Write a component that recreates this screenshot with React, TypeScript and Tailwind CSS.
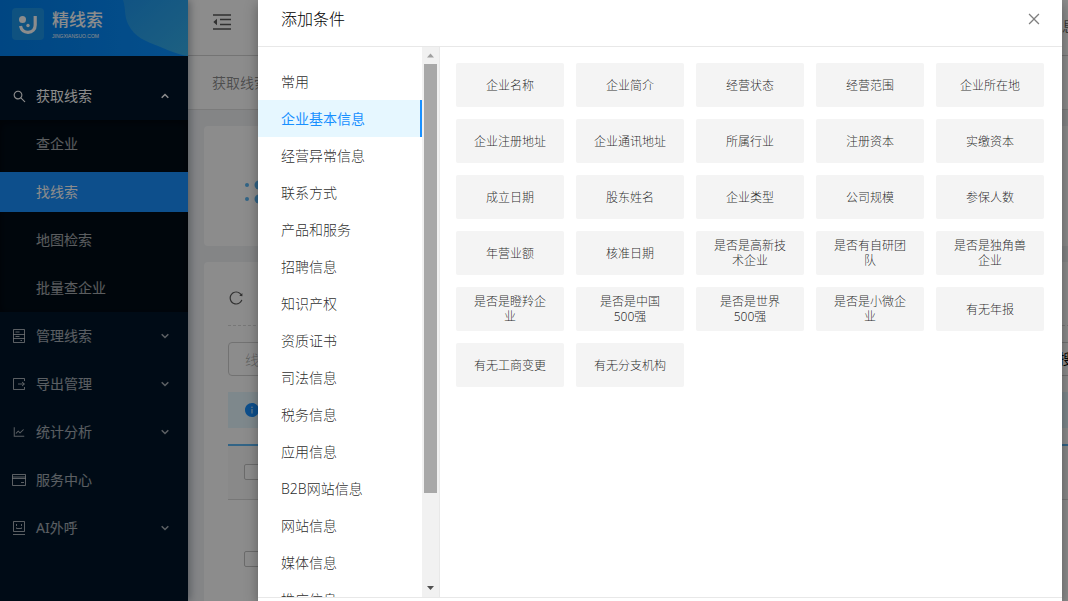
import type { ReactNode } from "react";
import {
  AiFillInfoCircle,
  AiOutlineClose,
  AiOutlineLineChart,
  AiOutlineReload,
  AiOutlineSearch,
} from "react-icons/ai";

const FONT = "font-['Noto_Sans','Noto_Sans_CJK_SC',sans-serif]";

const subMenu = ["查企业", "找线索", "地图检索", "批量查企业"];

const categories = [
  "常用", "企业基本信息", "经营异常信息", "联系方式", "产品和服务", "招聘信息", "知识产权",
  "资质证书", "司法信息", "税务信息", "应用信息", "B2B网站信息", "网站信息", "媒体信息", "推广信息",
];

const conditions = [
  "企业名称", "企业简介", "经营状态", "经营范围", "企业所在地",
  "企业注册地址", "企业通讯地址", "所属行业", "注册资本", "实缴资本",
  "成立日期", "股东姓名", "企业类型", "公司规模", "参保人数",
  "年营业额", "核准日期", "是否是高新技术企业", "是否有自研团队", "是否是独角兽企业",
  "是否是瞪羚企业", "是否是中国500强", "是否是世界500强", "是否是小微企业", "有无年报",
  "有无工商变更", "有无分支机构",
];

function LineIcon({ d }: { d: string }) {
  return (
    <svg width="14" height="14" viewBox="0 0 14 14" fill="none" stroke="currentColor" aria-hidden="true">
      <path d={d} />
    </svg>
  );
}

const CABINET = "M1.5.5h11v13h-11zM1.5 5.5h11M1.5 9.500h11M3.500 3h4M3.500 7.500h4M8.500 11.500h1.500";
const EXPORT = "M12.500 4V1.500h-11v11h11V10M6 7h6M10 5l2.500 2-2.500 2";
const CARD = "M.5 1.500h13v11H.5zM.5 4h13M.5 5.500h13M9 9.500h3";
const ROBOT = "M1.5.5h11v10h-11zM1 13.500h12M4.500 3v2M9.500 3v2M4.500 6.500v1h5v-1";

function FoldIcon() {
  return (
    <svg width="18" height="16" viewBox="0 0 18 16" aria-hidden="true">
      <path d="M0 1h18M0 15h18M7 5.500h11M7 10.500h11" stroke="currentColor" strokeWidth="1.500" />
      <path d="M4 4.800v6.400L.3 8z" fill="currentColor" />
    </svg>
  );
}

function Chevron({ up = false }: { up?: boolean }) {
  return (
    <svg width="8" height="6" viewBox="0 0 8 6" fill="none" stroke="currentColor" strokeWidth="1.6" aria-hidden="true">
      <path d={up ? "M.7 4.700 4 1.500l3.300 3.200" : "M.7 1.300 4 4.500l3.300-3.200"} />
    </svg>
  );
}

function MenuItem({ icon, label, arrow = true, open = false }: { icon: ReactNode; label: string; arrow?: boolean; open?: boolean }) {
  return (
    <button
      type="button"
      className={`my-1 flex h-10 w-full items-center pr-[19px] pl-3 text-left ${open ? "text-white" : "text-white/65"}`}
    >
      <span className="w-6 text-sm">{icon}</span>
      <span className="flex-1">{label}</span>
      {arrow && <Chevron up={open} />}
    </button>
  );
}

function Logo() {
  return (
    <div className="relative h-14 shrink-0 overflow-hidden bg-linear-to-r from-[#0080ee] to-[#0a90ff]">
      <svg className="absolute inset-0 h-full w-full" viewBox="0 0 188 56" preserveAspectRatio="none" aria-hidden="true">
        <defs>
          <linearGradient id="wave" x1="0" y1="0" x2="1" y2="1">
            <stop offset="0" stopColor="#1f98ee" />
            <stop offset="1" stopColor="#36b0ec" />
          </linearGradient>
        </defs>
        <path d="M123 0c3 9 1 15 5 24 7 14 18 17 30 22 10 4 18 8 30 10V0z" fill="url(#wave)" />
      </svg>
      <div className="relative flex h-12 items-center gap-2 pl-3">
        <svg width="32" height="32" viewBox="0 0 32 32" aria-hidden="true">
          <rect width="32" height="32" rx="4" fill="#1d96ea" />
          <circle cx="10.500" cy="11.500" r="3.500" fill="#fff" />
          <circle cx="16" cy="17.500" r="1.700" fill="#fff" />
          <path d="M8.500 18c1 4.500 4 6.300 7.500 6.300 4.500 0 7.200-3 7.200-7.300V8" fill="none" stroke="#fff" strokeWidth="3.200" />
        </svg>
        <div className="text-white">
          <div className="text-[17px] leading-6 font-medium">精线索</div>
          <div className="h-2 font-['Liberation_Sans',sans-serif] text-[5px] leading-2">JINGXIANSUO.COM</div>
        </div>
      </div>
    </div>
  );
}

function Sidebar() {
  return (
    <aside className="relative z-10 flex w-47 shrink-0 flex-col bg-[#001529] font-normal shadow-[2px_0_8px_rgba(0,21,41,0.35)]">
      <Logo />
      <nav className="flex flex-col pt-4">
        <MenuItem icon={<AiOutlineSearch className="size-[15px]" />} label="获取线索" open />
        <div className="flex flex-col bg-[#000c17] shadow-[inset_0_2px_8px_rgba(0,0,0,0.45)]">
          {subMenu.map((label) => (
            <a
              key={label}
              href="#"
              className={`my-1 flex h-10 items-center pl-9 ${label === "找线索" ? "bg-[#1890ff] text-white" : "text-white/65"}`}
            >
              {label}
            </a>
          ))}
        </div>
        <div className="flex flex-col">
          <MenuItem icon={<LineIcon d={CABINET} />} label="管理线索" />
          <MenuItem icon={<LineIcon d={EXPORT} />} label="导出管理" />
          <MenuItem icon={<AiOutlineLineChart />} label="统计分析" />
          <MenuItem icon={<LineIcon d={CARD} />} label="服务中心" arrow={false} />
          <MenuItem icon={<LineIcon d={ROBOT} />} label="AI外呼" />
        </div>
      </nav>
    </aside>
  );
}

function Page() {
  return (
    <main className="flex min-w-0 flex-1 flex-col text-black/65">
      <header className="flex h-14 shrink-0 items-center justify-between border-b border-[#d4d4d4] bg-white pr-6 pb-1 pl-[25px]">
        <button type="button" aria-label="收起菜单" className="pb-2 text-black/65">
          <FoldIcon />
        </button>
        <span className="font-normal">消息</span>
      </header>
      <div className="flex h-[54px] shrink-0 items-center border-b border-[#e0e0e0] bg-white pl-6 font-normal text-black/45">获取线索</div>
      <div className="flex flex-1 flex-col gap-4 pt-4 pl-4">
        <section className="flex h-30 shrink-0 items-center rounded-sm bg-white pt-3 pl-10">
          <svg width="36" height="24" viewBox="0 0 36 24" fill="#5cb6f5" aria-hidden="true">
            <circle cx="3" cy="5" r="2" />
            <circle cx="3" cy="19" r="2" />
            <circle cx="15" cy="5" r="4.500" />
            <circle cx="15" cy="19" r="4.500" />
            <circle cx="29" cy="5" r="4.500" />
            <circle cx="29" cy="19" r="4.500" />
          </svg>
        </section>
        <section className="flex-1 rounded-sm bg-white pl-6">
          <div className="flex h-16 items-center border-b border-dashed border-[#d9d9d9] pt-2">
            <button type="button" aria-label="刷新" className="text-base">
              <AiOutlineReload />
            </button>
          </div>
          <div className="mt-4 flex items-center justify-between rounded-sm border border-[#d0d0d0] pr-3">
            <input aria-label="线索名称" placeholder="线索名称" className="h-8 w-60 pl-4 outline-none placeholder:text-black/35" />
            <button type="button" className="font-normal text-black">搜索</button>
          </div>
          <div className="mt-4 flex h-9 items-center bg-[#e6f7ff] pl-4 text-sm text-[#1890ff]">
            <AiFillInfoCircle className="size-4" />
          </div>
          <table className="mt-4 w-full border-t-2 border-[#5cb6f5] text-left">
            <tbody>
              <tr className="h-[54px] border-b border-[#d9d9d9] bg-[#fafafa]">
                <td className="pl-4">
                  <input type="checkbox" aria-label="全选" className="block size-4 appearance-none rounded-xs border border-[#c4c4c4] bg-white" />
                </td>
              </tr>
              <tr className="h-30">
                <td className="pl-4">
                  <input type="checkbox" aria-label="选择线索" className="block size-4 appearance-none rounded-xs border border-[#c4c4c4] bg-white" />
                </td>
              </tr>
            </tbody>
          </table>
        </section>
      </div>
    </main>
  );
}

function ScrollBar() {
  return (
    <div className="flex w-[17px] flex-col items-center bg-[#f1f1f1]" aria-hidden="true">
      <svg className="shrink-0" width="17" height="17" viewBox="0 0 17 17" fill="#a0a0a0">
        <path d="M8.500 6.500 12 10.500H5z" />
      </svg>
      <div className="w-[13px] basis-[429px] bg-[#a8a8a8]" />
      <div className="flex-1" />
      <svg className="shrink-0" width="17" height="17" viewBox="0 0 17 17" fill="#505050">
        <path d="M8.500 10 5 6h7z" />
      </svg>
    </div>
  );
}

function ConditionDialog() {
  return (
    <div role="dialog" aria-label="添加条件" className="flex min-w-0 flex-1 flex-col bg-white shadow-[0_4px_12px_rgba(0,0,0,0.35)]">
      <div className="flex h-[47px] shrink-0 items-center justify-between border-b border-[#e8e8e8] pr-5 pb-2 pl-[23px]">
        <h2 className="text-base font-light text-black">添加条件</h2>
        <button type="button" aria-label="关闭" className="text-base text-black/50">
          <AiOutlineClose />
        </button>
      </div>
      <div className="flex min-h-0 flex-1">
        <div className="flex w-[182px] shrink-0 border-r border-[#e8e8e8]">
          <ul className="min-w-0 flex-1 overflow-hidden pt-4">
            {categories.map((label) => (
              <li key={label}>
                <button
                  type="button"
                  className={`flex h-[37px] w-full items-center pl-[23px] ${
                    label === "企业基本信息" ? "border-r-2 border-[#1890ff] bg-[#e6f7ff] font-normal text-[#1890ff]" : "text-black/85"
                  }`}
                >
                  {label}
                </button>
              </li>
            ))}
          </ul>
          <ScrollBar />
        </div>
        <div className="grid flex-1 auto-rows-[44px] grid-cols-5 content-start gap-3 pt-4 pr-[18px] pl-4">
          {conditions.map((label) => (
            <button
              key={label}
              type="button"
              className="flex items-center justify-center rounded-xs bg-[#f4f4f4] px-4 text-center text-xs leading-[15px] text-black/85"
            >
              {label}
            </button>
          ))}
        </div>
      </div>
      <div className="h-1 shrink-0 border-t border-[#e8e8e8]" />
    </div>
  );
}

export default function App() {
  return (
    <div className={`relative h-screen overflow-hidden text-sm font-light ${FONT}`}>
      <div className="flex h-full w-[calc(100%+32px)] bg-[#f0f2f5]">
        <Sidebar />
        <Page />
      </div>
      <div className="absolute inset-0 z-20 flex bg-black/45 pr-[6px] pl-[258px]">
        <ConditionDialog />
      </div>
    </div>
  );
}
